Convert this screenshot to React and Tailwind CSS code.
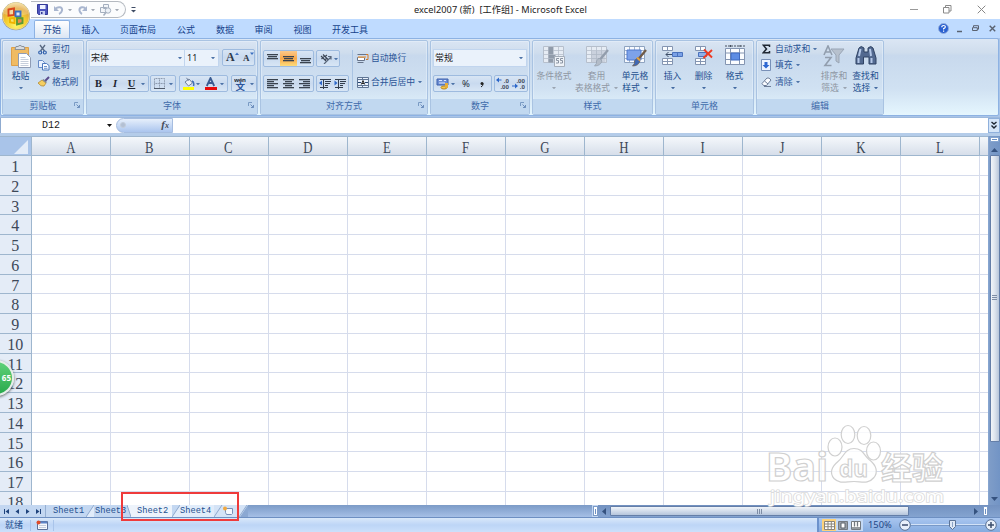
import React from "react";

const COLS = ["A", "B", "C", "D", "E", "F", "G", "H", "I", "J", "K", "L"];
const ROWS = Array.from({ length: 18 }, (_, i) => i + 1);

function Caret({ className = "" }) {
  return (
    <svg viewBox="0 0 4 2" className={"h-[2px] w-[4px] shrink-0 " + className} fill="currentColor">
      <path d="M0 0h4L2 2.400z" />
    </svg>
  );
}

function Svg({ w, h, children, className = "" }) {
  return (
    <svg width={w} height={h} viewBox={`0 0 ${w} ${h}`} className={"shrink-0 " + className} fill="none">
      {children}
    </svg>
  );
}

/* ---------- Title bar ---------- */

function OfficeButton() {
  return (
    <svg width="30" height="30" viewBox="0 0 30 30" className="absolute left-[1px] top-[1px] z-10">
      <defs>
        <radialGradient id="orb" cx="50%" cy="85%" r="85%">
          <stop offset="0" stopColor="#fff56a" />
          <stop offset="0.45" stopColor="#f4cf30" />
          <stop offset="0.75" stopColor="#e3a63a" />
          <stop offset="1" stopColor="#f3dc9c" />
        </radialGradient>
      </defs>
      <circle cx="15" cy="15.3" r="14" fill="#8b8f96" />
      <circle cx="15" cy="15" r="13.4" fill="url(#orb)" stroke="#f0dc90" strokeWidth="0.8" />
      <path d="M3 13a12 11 0 0 1 24 0q-12 4-24 0z" fill="#fff" opacity="0.22" />
      <g strokeWidth="1.9">
        <path d="M7.500 8.500l5.500-1v6.500l-5.500 .6z" stroke="#d9481c" fill="#f6d9a0" />
        <path d="M14.500 10.500h5v5h-5z" stroke="#3a6fc0" fill="#dbe8f5" />
        <path d="M9 17.500l4.500-.4v5l-4.500-.8z" stroke="#f0b400" fill="#f9e46c" />
        <path d="M16 17l5.500 .2v4.800l-5.500 1.500z" stroke="#5b9a36" fill="#f08a4a" />
      </g>
    </svg>
  );
}

function TitleBar() {
  return (
    <div className="flex h-[19px] bg-white">
      <div className="mt-px ml-[31px] flex h-[17px] w-[95px] items-center rounded-r-full border border-l-0 border-[#b4b9c0] bg-[#fbfcfd] pl-[6px] text-[#a3a9b3]">
        <Svg w={11} h={11}>
          <path d="M.5.5h10v10H1.500l-1-1z" fill="#4d55bd" stroke="#343a98" />
          <path d="M3 1h5.500v4H3z" fill="#eef2ff" />
          <path d="M3 7h5v4H3z" fill="#c7cff0" />
          <path d="M4 8h1.500v2H4z" fill="#343a98" />
        </Svg>
        <Svg w={10} h={10} className="ml-[6px]">
          <path d="M1.500 4C4 1 9 2 8 5.500Q7.500 8 5 9" stroke="#a9b6cf" strokeWidth="2" />
          <path d="M0 1v5h5z" fill="#a9b6cf" />
        </Svg>
        <Caret className="ml-[4px]" />
        <Svg w={9} h={10} className="ml-[6px]">
          <path d="M7.500 4C6 1 1 2 1.500 5.500Q2 8 4 9" stroke="#a9b6cf" strokeWidth="2" />
          <path d="M9 1v5H4z" fill="#a9b6cf" />
        </Svg>
        <Caret className="ml-[4px]" />
        <Svg w={12} h={12} className="ml-[5px]">
          <path d="M3.500 .5h5v4h-5zM.5 3.500h6v5h-6z" fill="#f2f5f9" stroke="#a4afbf" />
          <circle cx="8" cy="6.500" r="2.700" fill="#edf2f8" stroke="#a4afbf" />
          <path d="M6 8.500L3.500 11.500" stroke="#a4afbf" strokeWidth="1.500" />
        </Svg>
        <Caret className="ml-[3px]" />
      </div>
      <div className="flex w-[14px] items-center justify-center text-[#3f4d66]">
        <Svg w={5} h={6}>
          <path d="M.5 .5h4" stroke="currentColor" />
          <path d="M0 3h5L2.500 5.500z" fill="currentColor" />
        </Svg>
      </div>
      <div className="ml-[274px] whitespace-pre font-['Noto_Sans','Noto_Sans_CJK_SC',sans-serif] text-[9.200px] leading-[19px] tracking-[0.060px] text-[#222]">
        {"excel2007 (新)\u00a0 [工作组] - Microsoft Excel"}
      </div>
      <div className="ml-auto flex items-center gap-[25px] pr-[14px]">
        <Svg w={8} h={9}><path d="M0 4.500h8" stroke="#999" /></Svg>
        <Svg w={9} h={9}><path d="M.5 2.500h5.500v5.500H.5zM2.500 2.500v-2h5.500V6H6" stroke="#8a8a8a" /></Svg>
        <Svg w={9} h={9}><path d="M.7.7l7.600 7.600M8.300.7L.7 8.300" stroke="#888" /></Svg>
      </div>
    </div>
  );
}

/* ---------- Ribbon tabs ---------- */

const TABS = [
  ["插入", "w-[39px]"],
  ["页面布局", "w-[56px]"],
  ["公式", "w-[40px]"],
  ["数据", "w-[38px]"],
  ["审阅", "w-[39px]"],
  ["视图", "w-[39px]"],
  ["开发工具", "w-[56px]"],
];

function TabBar() {
  return (
    <div className="flex h-[19px] items-end bg-[#bfdbff] text-[9px] leading-[17px] text-[#15428b]">
      <div className="ml-[34px] mr-px h-[18px] w-[36px] rounded-t-[2px] border border-b-0 border-[#8db2e3] bg-gradient-to-b from-white to-[#dbe6f4] text-center">
        开始
      </div>
      {TABS.map(([t, w]) => (
        <div key={t} className={"h-[18px] pt-px text-center " + w}>
          {t}
        </div>
      ))}
      <div className="ml-auto flex h-[19px] items-center pr-[4px] text-[#5a6270]">
        <Svg w={11} h={11}>
          <circle cx="5.500" cy="5.500" r="5" fill="#2a60d0" stroke="#93aede" />
          <path d="M3.800 4.200q0-1.700 1.800-1.700t1.700 1.400q0 1-1.700 1.700v1M5.600 7.600v1.200" stroke="#fff" strokeWidth="1.200" />
        </Svg>
        <Svg w={6} h={8} className="ml-[8px]"><path d="M0 6.500h5" stroke="currentColor" strokeWidth="1.500" /></Svg>
        <Svg w={7} h={7} className="ml-[9px]"><path d="M1.500 2V.7h5v3.500H5.500M.5 2.700h4.800v2.800H.5z" stroke="currentColor" /></Svg>
        <Svg w={7} h={7} className="ml-[10px]"><path d="M.7.7l5.500 5.500M6.200.7L.7 6.200" stroke="currentColor" strokeWidth="1.400" /></Svg>
      </div>
    </div>
  );
}

/* ---------- Ribbon ---------- */

function Launcher() {
  return (
    <Svg w={6} h={6} className="absolute right-[3px] top-[3px]">
      <path d="M.5 4V.5H4" stroke="#7a9bc4" />
      <path d="M2.500 2.500l3 3M5.500 3v2.500H3" stroke="#6d8fbd" />
    </Svg>
  );
}

function Group({ title, width, launcher, children }) {
  return (
    <div className={"flex h-[75px] shrink-0 flex-col overflow-hidden rounded-[2px] border border-[#a9c3e2] shadow-[inset_0_0_0_0.500px_#e9f2fc] " + width}>
      <div className="flex h-[58px] shrink-0">{children}</div>
      <div className="relative h-[15px] bg-[#c1d8f0] text-center text-[9px] leading-[14px] text-[#3e6aaa]">
        {title}
        {launcher && <Launcher />}
      </div>
    </div>
  );
}

function Box({ className = "", children }) {
  return (
    <div className={"flex h-[17px] shrink-0 items-center rounded-[2px] border border-[#9ebbdf] bg-gradient-to-b from-[#d8e5f4] via-[#c9daef] to-[#d8e6f5] " + className}>
      {children}
    </div>
  );
}

function Small({ icon, label, caret, className = "" }) {
  return (
    <div className={"flex h-[16.300px] items-center whitespace-nowrap text-[8.800px] leading-[16px] text-[#2b5597] " + className}>
      <span className="flex w-[14px] shrink-0 items-center">{icon}</span>
      {label}
      {caret && <Caret className="ml-[3px] text-[#4e74a8]" />}
    </div>
  );
}

function Big({ icon, l1, l2, caret = true, className = "", tone = "text-[#24508f]" }) {
  return (
    <div className={"flex shrink-0 flex-col items-center whitespace-nowrap text-[8.800px] leading-[12px] " + tone + " " + className}>
      <span className="mt-[4px] flex h-[25px] items-start">{icon}</span>
      <span>{l1}</span>
      <span className="flex h-[12px] items-center">
        {l2}
        {caret && <Caret className={l2 ? "ml-[4px] opacity-80" : "opacity-80"} />}
      </span>
    </div>
  );
}

function Lines({ rows }) {
  return (
    <Svg w={11} h={11}>
      {rows.map(([x, y, w], i) => (
        <rect key={i} x={x} y={y} width={w} height="1.300" fill="#3a434f" />
      ))}
    </Svg>
  );
}

function GridIcon({ stroke = "#8ea3c0", fill = "#f7faff", children }) {
  return (
    <Svg w={24} h={23}>
      <path d="M1.500 1.500h20v16h-20z" fill={fill} stroke={stroke} />
      <path d="M1 5.500h20M1 9.500h20M1 13.500h20M6.500 1.500v16M11.500 1.500v16M16.500 1.500v16" stroke={stroke} strokeWidth=".8" />
      {children}
    </Svg>
  );
}

function ClipboardGroup() {
  return (
    <Group title="剪贴板" width="w-[82px]" launcher>
      <div className="flex w-[35px] shrink-0 flex-col items-center text-[8.800px] leading-[12px] text-[#24508f]">
        <Svg w={22} h={25} className="mt-[3px]">
          <path d="M1.500 3.500h17v18h-17z" fill="#f0bb62" stroke="#dda04a" />
          <path d="M5 5.500l1-3h2q2-2.500 4 0h2l1 3z" fill="#d7dbe0" stroke="#8b929b" />
          <path d="M8.500 9.500h8l4 4v10h-12z" fill="#fff" stroke="#8f9cb5" />
          <path d="M10.500 13.500h5M10.500 15.500h8M10.500 17.500h8M10.500 19.500h8M10.500 21.500h8" stroke="#c6cedb" />
        </Svg>
        <span className="mt-[1px]">粘贴</span>
        <Caret className="mt-[5px] text-[#4e74a8]" />
      </div>
      <div className="flex flex-col">
        <Small label="剪切" icon={<Svg w={9} h={11}><path d="M2 1l4.500 6M7 1L2.500 7" stroke="#5a6a83" strokeWidth="1.300" /><circle cx="2.200" cy="8.500" r="1.500" stroke="#3161ad" strokeWidth="1.200" /><circle cx="6.800" cy="8.500" r="1.500" stroke="#3161ad" strokeWidth="1.200" /></Svg>} />
        <Small label="复制" icon={<Svg w={12} h={11}><path d="M.5.5h4l2 2v5h-6z" fill="#e8f1ff" stroke="#668bc6" /><path d="M4.500 3.500h4l2.500 2V10H4.500z" fill="#f8fbff" stroke="#4d78bd" /><path d="M6 6.500h3M6 8.300h3.500" stroke="#6b92cc" /></Svg>} />
        <Small label="格式刷" icon={<Svg w={12} h={11}><path d="M11 1L7 5" stroke="#5b4a8c" strokeWidth="2" /><path d="M4 4l4 3-2 3q-3 1-6-3z" fill="#f5cf61" stroke="#b48a35" strokeWidth=".8" /><path d="M5 3.500l3.500 3" stroke="#7b8290" strokeWidth="1.500" /></Svg>} />
      </div>
    </Group>
  );
}

function FontGroup() {
  return (
    <Group title="字体" width="w-[172px]" launcher>
      <div className="flex flex-col pl-[2px] pt-[8px]">
        <div className="flex h-[19px]">
          <div className="flex h-[18px] w-[96px] items-center border border-[#c1d5ee] bg-[#eaf2fb] pl-[1px] pr-[2px] text-[9px] text-[#222]">
            宋体<Caret className="ml-auto text-[#4e74a8]" />
          </div>
          <div className="flex h-[18px] w-[34px] items-center border border-l-0 border-[#c1d5ee] bg-[#eaf2fb] pl-[2px] pr-[3px] text-[9px] text-[#222]">
            11<Caret className="ml-auto text-[#4e74a8]" />
          </div>
          <Box className="ml-[3px] w-[33px] font-['Liberation_Serif',serif] font-bold text-[#2e3947]">
            <span className="w-[12px] pl-[3px] text-[12px] leading-[15px]">A</span>
            <Svg w={4} h={10} className="mb-[2px]"><path d="M0 3h4L2 .5z" fill="#3b6fc0" /></Svg>
            <span className="pl-[4px] pt-[2px] text-[9px] leading-[13px]">A</span>
            <Svg w={4} h={10} className="mb-[2px]"><path d="M0 .5h4L2 3z" fill="#3b6fc0" /></Svg>
          </Box>
        </div>
        <div className="mt-[7px] flex font-['Liberation_Serif',serif] text-[#1e2530]">
          <Box className="w-[60px] text-[10.500px] leading-[15px]">
            <b className="w-[17px] text-center">B</b>
            <b className="w-[16px] text-center italic">I</b>
            <b className="w-[17px] text-center underline">U</b>
            <Caret className="ml-px text-[#4e74a8]" />
          </Box>
          <Box className="ml-[1px] w-[26px] gap-[4px] pl-[3px]">
            <Svg w={11} h={11}><path d="M.5.5h10v10H.5zM5.500.5v10M.5 5.500h10" stroke="#8794a8" strokeDasharray="1 .6" /><path d="M0 10.500h11" stroke="#4f5a6b" /></Svg>
            <Caret className="text-[#4e74a8]" />
          </Box>
          <Box className="ml-[3px] w-[49px] pl-[2px]">
            <Svg w={13} h={13}><path d="M3 5l4-3 3.500 4-4 3z" fill="#e9eef5" stroke="#70809b" /><path d="M10 4q2.500 1 1.500 5" stroke="#416fb5" strokeWidth="1.500" /><path d="M4.500.8l2 3" stroke="#70809b" /><path d="M1 10h11v3H1z" fill="#ff0" /></Svg>
            <Caret className="ml-[1px] text-[#4e74a8]" />
            <Svg w={13} h={13} className="ml-[4px]"><path d="M2.800 9L6.500 1 10.200 9M4.300 6h4.400" stroke="#3b5c92" strokeWidth="1.800" /><path d="M1 10h12v3H1z" fill="#e80c0c" /></Svg>
            <Caret className="ml-[3px] text-[#4e74a8]" />
          </Box>
          <Box className="ml-[3px] w-[26px] pl-[2px]">
            <Svg w={13} h={14}>
              <text x="0" y="5" fontSize="6" fontWeight="700" fontFamily="'Noto Sans',sans-serif" fill="#2a313c" textLength="12">wén</text>
              <text x="1.500" y="13" fontSize="9.500" fontWeight="700" fontFamily="'Noto Sans CJK SC',sans-serif" fill="#2a559c">文</text>
            </Svg>
            <Caret className="ml-[3px] text-[#4e74a8]" />
          </Box>
        </div>
      </div>
    </Group>
  );
}

function AlignGroup() {
  return (
    <Group title="对齐方式" width="w-[168px]" launcher>
      <div className="flex w-[91px] flex-col gap-[8px] pl-[2px] pt-[9px]">
        <div className="flex gap-[2px]">
          <Box className="w-[51px] justify-between">
            <span className="flex w-[16px] justify-center"><Lines rows={[[0, 1, 11], [1, 3, 9], [0, 5, 11]]} /></span>
            <span className="flex h-[15px] w-[17px] items-center justify-center bg-gradient-to-b from-[#fbc98a] via-[#f9a848] to-[#fddc7b]"><Lines rows={[[0, 3, 11], [1, 5, 9], [0, 7, 11]]} /></span>
            <span className="flex w-[16px] justify-center"><Lines rows={[[0, 5, 11], [1, 7, 9], [0, 9, 11]]} /></span>
          </Box>
          <Box className="w-[24px] gap-[2px] pl-[3px]">
            <Svg w={12} h={11}><path d="M4 11L11 4M8 3.500h3v3" stroke="#59677b" strokeWidth="1.200" /><path d="M1 3l5 5M3 1.500l5 5M1.500 6l3-3M5 3.500l2-1.500M4.500 7l2.500-2" stroke="#3c4655" strokeWidth="1.100" /></Svg>
            <Caret className="text-[#4e74a8]" />
          </Box>
        </div>
        <div className="flex gap-[2px]">
          <Box className="w-[51px] justify-around">
            <Lines rows={[[0, 1, 11], [0, 3, 7], [0, 5, 11], [0, 7, 7], [0, 9, 11]]} />
            <Lines rows={[[0, 1, 11], [2, 3, 7], [0, 5, 11], [2, 7, 7], [0, 9, 11]]} />
            <Lines rows={[[0, 1, 11], [4, 3, 7], [0, 5, 11], [4, 7, 7], [0, 9, 11]]} />
          </Box>
          <Box className="w-[33px] justify-around">
            <Svg w={12} h={11}><path d="M1 1.500h11M6 3.500h6M6 5.500h5M6 7.500h3M1 9.500h8M4.500 1v10" stroke="#333e4d" /><path d="M0 5l3-2.500v5z" fill="#2c67c9" /></Svg>
            <Svg w={12} h={11}><path d="M1 1.500h11M6 3.500h6M6 5.500h5M6 7.500h3M1 9.500h8M4.500 1v10" stroke="#333e4d" /><path d="M3.500 5l-3-2.500v5z" fill="#2c67c9" /></Svg>
          </Box>
        </div>
      </div>
      <div className="mt-[9px] h-[40px] w-px bg-[#a9c3e2]" />
      <div className="flex flex-col pl-[4px] pt-[9px]">
        <Small label="自动换行" icon={<Svg w={12} h={11}><path d="M.5 1.500h9M.5 4.500h7v3h-7zM.5 9.500h6" stroke="#67748a" fill="#fff" /><path d="M1 4h8" stroke="#e8a35a" strokeWidth="1.500" /><path d="M9 1.500h2v5H9" stroke="#d47a28" /></Svg>} />
        <Small className="mt-[7.700px]" caret label="合并后居中" icon={<Svg w={12} h={11}><path d="M.5.500h11v10H.5zM.5 2.500h11M.5 8.500h11M5.500.5v2M5.500 8.500v2" fill="#e9f1fc" stroke="#5f7594" /><path d="M1 5.500h3M8 5.500h3" stroke="#22426e" /><path d="M4.300 7.500L6 3.500l1.700 4M5 6.500h2" stroke="#222" /></Svg>} />
      </div>
    </Group>
  );
}

function DecimalIcon({ top, bottom, increase }) {
  return (
    <Svg w={14} h={13}>
      <g fontSize="6.200" fontWeight="700" fontFamily="'Liberation Sans',sans-serif" fill="#3b4657" textAnchor="end">
        <text x="13" y="5.500">{top}</text>
        <text x="13" y="11.500">{bottom}</text>
      </g>
      {increase ? (
        <path d="M0 3l3-2.500v5zM3 2.500h2.500v1H3z" fill="#2c67c9" />
      ) : (
        <path d="M6 9L3 6.500v5zM0 8.500h3v1H0z" fill="#2c67c9" />
      )}
    </Svg>
  );
}

function NumberGroup() {
  return (
    <Group title="数字" width="w-[100px]" launcher>
      <div className="flex flex-col pl-[2px] pt-[8px]">
        <div className="flex h-[18px] w-[94px] items-center border border-[#c1d5ee] bg-[#eaf2fb] pl-[1px] pr-[3px] text-[9px] text-[#222]">
          常规<Caret className="ml-auto text-[#4e74a8]" />
        </div>
        <div className="mt-[8px] flex gap-[2px]">
          <Box className="w-[59px] pl-[2px]">
            <Svg w={13} h={12}><path d="M1 1h11v6H1z" fill="#6e8ed3" stroke="#3d61ad" /><path d="M3 2.500h3M8 2.500h2M3 5h6" stroke="#dce8ff" /><ellipse cx="8" cy="9.500" rx="3" ry="1.500" fill="#f5c84d" stroke="#b78522" /><path d="M9 5h3v5H9z" fill="#e6ad38" /></Svg>
            <Caret className="ml-[2px] text-[#4e74a8]" />
            <span className="ml-[7px] text-[9.500px] leading-[15px] text-[#273140]">%</span>
            <svg width="4" height="6" viewBox="0 0 4 6" className="ml-[10px] mt-[2px]"><circle cx="2" cy="1.600" r="1.500" fill="#222" /><path d="M3 1.500q.2 2.500-2 3.500" stroke="#222" fill="none" /></svg>
          </Box>
          <Box className="w-[34px] justify-around">
            <DecimalIcon top=".0" bottom=".00" increase />
            <DecimalIcon top=".00" bottom=".0" />
          </Box>
        </div>
      </div>
    </Group>
  );
}

function StylesGroup() {
  const brush = (a, b) => (
    <>
      <path d="M23 5l-7.500 9" stroke={a} strokeWidth="2.300" />
      <path d="M14 13l3 3q-1.500 5-7.500 5 3-3 2-5z" fill={b} stroke={a} strokeWidth=".7" />
    </>
  );
  return (
    <Group title="样式" width="w-[121px]">
      <Big className="w-[42px]" tone="text-[#8f97a3]" l1="条件格式" icon={
        <GridIcon stroke="#b6bfcc" fill="#e6ecf4">
          <path d="M6.500 2h4.500v7.500H6.500zM6.500 10h7v3.500h-7zM6.500 14h4.500v3.500H6.500z" fill="#909baa" />
          <path d="M12.500 11.500h10v10h-10z" fill="#eef2f7" stroke="#a4adb9" />
          <path d="M17 13.500h-2.500v2h2v2.500h-2.500M21 13.500h-2.500v2h2v2.500H18" stroke="#8a94a3" />
        </GridIcon>} />
      <Big className="w-[43px]" tone="text-[#8f97a3]" l1="套用" l2="表格格式" icon={
        <GridIcon stroke="#b6bfcc" fill="#e6ecf4">
          <path d="M6.500 6h14v11h-14z" fill="#a8b2c1" opacity=".45" />
          {brush("#929dac", "#b3bcc8")}
        </GridIcon>} />
      <Big className="w-[34px]" l1="单元格" l2="样式" icon={
        <GridIcon>
          <path d="M4 5h14v10H4z" fill="#7da2ea" stroke="#4f78cc" />
          {brush("#6f5b49", "#3f68b4")}
          <path d="M14 12.500l3 3" stroke="#e2a23f" strokeWidth="2" />
        </GridIcon>} />
    </Group>
  );
}

function CellsGroup() {
  const table = (
    <path d="M1.500 1.500h10v4h-10zM6.500 1.500v4M1.500 13.500h10v6h-10zM6.500 13.500v6M1.500 16.500h10" fill="#fbfdff" stroke="#8495b1" />
  );
  return (
    <Group title="单元格" width="w-[99px]">
      <Big className="w-[33px]" l1="插入" icon={
        <Svg w={23} h={22}>{table}<path d="M11.500 7.500h10v4h-10z" fill="#7aa1e6" stroke="#4a72bd" /><path d="M16.500 7.500v4" stroke="#4a72bd" /><path d="M5 9.500h6M7.500 7L5 9.500 7.500 12" stroke="#3c4d67" /></Svg>} />
      <Big className="w-[29px]" l1="删除" icon={
        <Svg w={20} h={22}>{table}<path d="M4.500 7.500h8v4h-8z" fill="#8fb0ea" stroke="#4a72bd" /><path d="M10 4.500l8 8M18 5l-8.500 8" stroke="#ee3b24" strokeWidth="1.900" /></Svg>} />
      <Big className="w-[33px]" l1="格式" icon={
        <Svg w={24} h={23}><path d="M2.500 3.500h19v16h-19z" fill="#fbfdff" stroke="#8495b1" /><path d="M2 8h20M2 14.500h20M7.500 3.500v16M16.500 3.500v16" stroke="#8495b1" /><path d="M8 8h8.500v7H8z" fill="#5d8de4" stroke="#3e6ac0" /><path d="M2 1h20M7.500 0v2.500M17 0v2.500" stroke="#46505e" strokeDasharray="2 1" /></Svg>} />
    </Group>
  );
}

function EditGroup() {
  return (
    <Group title="编辑" width="w-[128px]">
      <div className="flex w-[60px] shrink-0 flex-col pl-[4px]">
        <Small label="自动求和" caret icon={<Svg w={9} h={10} className="ml-[1px]"><path d="M7.500 3V1.200H1.300L4.500 5 1.300 8.700h6.200V7" stroke="#1f2733" strokeWidth="1.500" /></Svg>} />
        <Small label="填充" caret icon={<Svg w={10} h={12}><path d="M.5.5h9v11h-9z" fill="#eef4ff" stroke="#7890b8" /><path d="M3.500 3h3v3H8.500L5 9.500 1.500 6h2z" fill="#2d67d2" /></Svg>} />
        <Small label="清除" caret icon={<Svg w={11} h={10}><path d="M1 6.500L6 1q2-.8 4 2L5.500 8.500H2.500z" fill="#fafcff" stroke="#6c7d98" /><path d="M3.500 4l3.500 3M3 9.500h7" stroke="#6c7d98" /></Svg>} />
      </div>
      <Big className="ml-px w-[32px]" tone="text-[#8f97a3]" l1="排序和" l2="筛选" icon={
        <Svg w={24} h={23}><path d="M2 10L6 1l4 9M3.500 7h5M3 12.500h6L3 20.500h6.500" stroke="#929eae" strokeWidth="1.600" /><path d="M9 4h13l-5 6v8l-3-2v-6z" fill="#b7c1ce" stroke="#99a5b5" /></Svg>} />
      <Big className="w-[31px]" l1="查找和" l2="选择" icon={
        <Svg w={22} h={22}>
          <path d="M4 3q2-3 5 0v4h4V3q3-3 5 0l3 10v6h-7v-7H8.500v7H1v-6z" fill="#526990" stroke="#2f4263" />
          <path d="M3.500 13v5M16.500 13v5M5.500 4L4 11M15 4l1 7" stroke="#b4c8e8" strokeWidth="2" />
        </Svg>} />
    </Group>
  );
}

function Ribbon() {
  return (
    <div className="h-[79px] bg-[#a9c4e8]">
      <div className="flex h-[78px] w-[999px] gap-[2px] rounded-[2px] border border-[#8db2e3] bg-[linear-gradient(180deg,#dbe6f4_0%,#cfdded_18%,#c8d9ed_22%,#d0e1f2_65%,#e5f6fe_100%)] pl-px pt-px">
        <ClipboardGroup />
        <FontGroup />
        <AlignGroup />
        <NumberGroup />
        <StylesGroup />
        <CellsGroup />
        <EditGroup />
      </div>
    </div>
  );
}

/* ---------- Formula bar ---------- */

function FormulaBar() {
  return (
    <div className="flex h-[18.500px] border-b-[3px] border-t-[1.500px] border-b-[#b4cce9] border-t-[#9db9dc] bg-white">
      <div className="flex w-[116px] items-center border-l border-[#8fabd0] pl-[41px] pr-[4px] font-['Liberation_Mono',monospace] text-[10px] text-[#222]">
        D12
        <Svg w={5} h={3} className="ml-auto"><path d="M0 0h5L2.500 3z" fill="#111" /></Svg>
      </div>
      <div className="flex w-[57px] items-center rounded-l-full border border-[#a6bde0] bg-gradient-to-b from-[#e6effb] to-[#abc5ee] pl-[3px] pr-[3px]">
        <span className="h-[6px] w-[6px] rounded-full border border-[#c3cddb] bg-[#b3c0d4]" />
        <span className="ml-auto font-['Liberation_Serif',serif] text-[11px] font-bold italic leading-[11px] text-[#444c58]">f<span className="text-[8px]">x</span></span>
      </div>
      <div className="flex-1" />
      <div className="flex w-[12px] items-center justify-center border border-[#8fb0dc] bg-[#d5e5f8]">
        <Svg w={6} h={8}><path d="M.5 1L3 3l2.500-2M.5 4.500L3 7l2.500-2.500" stroke="#1d2530" strokeWidth="1.400" /></Svg>
      </div>
    </div>
  );
}

/* ---------- Sheet ---------- */

function Grid() {
  return (
    <div className="h-[370px] min-w-0 flex-1 overflow-hidden bg-white font-['Liberation_Serif',serif] text-[#3d4858]">
      <div className="flex h-[20.500px] bg-gradient-to-b from-[#f6f9fc] to-[#d5dde9] text-[16px]">
        <div className="flex w-[31.500px] shrink-0 items-end justify-end border-b border-r border-t border-[#9eb6ce] bg-[#a9c4e9] pb-[1px] pr-[3px]">
          <Svg w={14} h={14}><path d="M14 0v14H0z" fill="#e3ecf8" /></Svg>
        </div>
        {COLS.map((c) => (
          <div key={c} className="w-[79.050px] shrink-0 border-b border-r border-t border-[#9eb6ce] text-center leading-[22px]">
            <span className="inline-block scale-x-[0.8]">{c}</span>
          </div>
        ))}
        <div className="flex-1 border-b border-t border-[#9eb6ce]" />
      </div>
      {ROWS.map((r) => (
        <div key={r} className="flex h-[19.770px]">
          <div className="w-[31.500px] shrink-0 border-b border-r border-[#9eb6ce] bg-[#e4ecf7] text-center text-[16px] leading-[22px]">{r}</div>
          {COLS.map((c) => (
            <div key={c} className="w-[79.050px] shrink-0 border-b border-r border-[#d6dcec]" />
          ))}
          <div className="flex-1 border-b border-[#d6dcec]" />
        </div>
      ))}
    </div>
  );
}

function VScroll() {
  return (
    <div className="flex w-[12px] flex-col items-center border-l border-[#86a5d0] bg-gradient-to-r from-[#7f9dc8] to-[#7294c5] text-[#35527f]">
      <div className="mt-px flex h-[5px] w-[9px] items-center justify-center border border-[#86a5d0] bg-white"><span className="h-px w-[5px] bg-[#6b8fc2]" /></div>
      <Svg w={7} h={4} className="mt-[6px]"><path d="M0 4h7L3.500 0z" fill="currentColor" /></Svg>
      <div className="mt-[3px] flex h-[287px] w-[10px] items-center justify-center rounded-[1px] border border-[#647ea8] bg-gradient-to-r from-[#f2f5f9] via-[#dce3ed] to-[#b7c5da]">
        <Svg w={5} h={6}><path d="M0 .5h5M0 2.500h5M0 4.500h5" stroke="#7e8da5" /></Svg>
      </div>
      <Svg w={7} h={4} className="mb-[4px] mt-auto"><path d="M0 0h7L3.500 4z" fill="currentColor" /></Svg>
    </div>
  );
}

function Slash() {
  return (
    <Svg w={8} h={12}><path d="M0 12L8 0v12z" fill="#e1ecfa" /><path d="M0 12L8 0" stroke="#8ea9cd" /></Svg>
  );
}

function SheetTabs() {
  return (
    <div className="flex h-[12px] bg-[#c3d7f1] font-['Liberation_Mono',monospace] text-[8.700px] leading-[12px] text-[#24508f]">
      <div className="flex w-[46px] items-center justify-between border-r border-[#95afd2] pl-[4px] pr-[4px]">
        <Svg w={5} h={5}><path d="M.5 0v5" stroke="#1f437c" /><path d="M5 0v5L1.500 2.500z" fill="#1f437c" /></Svg>
        <Svg w={4} h={5}><path d="M4 0v5L.5 2.500z" fill="#1f437c" /></Svg>
        <Svg w={4} h={5}><path d="M0 0v5l3.500-2.500z" fill="#1f437c" /></Svg>
        <Svg w={5} h={5}><path d="M4.500 0v5" stroke="#1f437c" /><path d="M0 0v5l3.500-2.500z" fill="#1f437c" /></Svg>
      </div>
      <span className="w-[40px] pl-[7px]">Sheet1</span>
      <Slash />
      <span className="w-[33px] pl-[1px]">Sheet3</span>
      <Svg w={4} h={12}><path d="M0 0h4v12z" fill="#edf3fb" /><path d="M0 0l4 12" stroke="#8ea9cd" /></Svg>
      <span className="w-[41px] bg-[#edf3fb] pl-[6px]">Sheet2</span>
      <Slash />
      <span className="w-[34px] bg-[#e1ecfa]">Sheet4</span>
      <Svg w={34} h={12}>
        <path d="M0 0h34l-8 12H0z" fill="#d4e3f6" />
        <path d="M0 12L8 0M25 12L33 0" stroke="#8ea9cd" />
        <path d="M26 12L34 0v12z" fill="#8ba8d2" />
        <path d="M11.500 3.500h7v5l-1 1h-5l-1-2z" fill="#f5f8fd" stroke="#7890b8" />
        <circle cx="11" cy="3.500" r="2" fill="#f0a840" />
      </Svg>
      <div className="w-[344px] bg-gradient-to-b from-[#7c9bc7] to-[#a5bfe6]" />
      <div className="my-px ml-px flex w-[5px] items-center justify-center border border-[#7c9bc7] bg-white"><span className="h-[5px] w-px bg-[#6b8fc2]" /></div>
      <div className="flex flex-1 items-center bg-gradient-to-b from-[#7291c0] to-[#84a3d0] text-[#35527f]">
        <Svg w={4} h={7} className="ml-[4px]"><path d="M4 0v7L0 3.500z" fill="currentColor" /></Svg>
        <div className="ml-[4px] flex h-[10px] w-[299px] items-center justify-center rounded-[1px] border border-[#647ea8] bg-gradient-to-b from-[#f0f4f9] to-[#b5c5dc]">
          <Svg w={6} h={5}><path d="M.5 0v5M2.500 0v5M4.500 0v5" stroke="#7e8da5" /></Svg>
        </div>
        <Svg w={4} h={7} className="ml-auto"><path d="M0 0v7l4-3.500z" fill="currentColor" /></Svg>
        <div className="ml-[5px] mr-[12px] flex h-[10px] w-[5px] items-center justify-center border border-[#7c9bc7] bg-white"><span className="h-[5px] w-px bg-[#6b8fc2]" /></div>
      </div>
    </div>
  );
}

function ZoomButton({ plus }) {
  return (
    <Svg w={12} h={12}>
      <circle cx="6" cy="6" r="5.300" fill="#e9f0fa" stroke="#5b7396" />
      <path d={plus ? "M3 6h6M6 3v6" : "M3 6h6"} stroke="#3b4d6c" strokeWidth="1.500" />
    </Svg>
  );
}

function StatusBar() {
  return (
    <div className="flex h-[15px] items-center border-t border-[#6d8fc2] bg-gradient-to-b from-[#d9e8fa] via-[#bdd5f6] to-[#cbe0fb] text-[9px] leading-[14px] text-[#24508f]">
      <span className="w-[30px] pl-[5px]">就绪</span>
      <span className="flex w-[24px] items-center border-x border-[#a9c4ea] pl-[5px]">
        <Svg w={12} h={11}><path d="M1.500 1.500h10v8h-10z" fill="#f5f8fd" stroke="#5c7099" /><path d="M1 2.500h10" stroke="#5b83c7" strokeWidth="2" /><path d="M3 5.500h7M3 7.500h7" stroke="#c3ccdb" /><circle cx="2.500" cy="2.500" r="2" fill="#de4b2a" /></Svg>
      </span>
      <div className="ml-auto flex h-[14px] w-[183px] items-center border-l-2 border-[#6c92cc] bg-gradient-to-b from-[#a9c6f0] to-[#85abdf] pl-[3px]">
        <span className="flex h-[12px] w-[14px] items-center justify-center bg-[#fcd27c]"><Svg w={11} h={9}><path d="M.5.5h10v8H.5zM.5 3h10M.5 5.700h10M4 .5v8M7.300.5v8" fill="#fff" stroke="#8a857a" /></Svg></span>
        <span className="flex h-[12px] w-[13px] items-center justify-center bg-[#c4d9f5]"><Svg w={10} h={9}><path d="M.5.5h9v8h-9z" fill="#989ea6" stroke="#737980" /><path d="M3 2h4v5H3z" fill="#fff" stroke="#5d646d" /></Svg></span>
        <span className="flex h-[12px] w-[14px] items-center justify-center bg-[#c4d9f5]"><Svg w={10} h={9}><path d="M.5.5h9v8h-9z" fill="#fff" stroke="#737980" /><path d="M3.500.5v5M6.500.5v5M.5 7h9" stroke="#737980" strokeWidth="1.300" /></Svg></span>
        <span className="ml-[5px] w-[31px] font-['Noto_Sans',sans-serif] text-[9.300px] text-[#1e4685]">150%</span>
        <ZoomButton />
        <Svg w={74} h={12}><path d="M0 5.500h74" stroke="#d2e2f7" /><path d="M0 6.500h74" stroke="#6485b4" strokeWidth=".6" /><path d="M38.500 1.500h6v6l-3 3-3-3z" fill="#dfe9f6" stroke="#5b7396" /><path d="M41.500 3v5" stroke="#8ba3c5" /></Svg>
        <ZoomButton plus />
      </div>
    </div>
  );
}

function Watermark() {
  return (
    <svg width="190" height="92" viewBox="0 0 190 92" className="absolute left-[762px] top-[420px]" fill="#fff" stroke="#d0d0d0" strokeWidth="1.200" fillOpacity=".8">
      <text x="4" y="60.500" fontSize="40" fontWeight="700" fontFamily="'Noto Sans',sans-serif" textLength="62" lengthAdjust="spacingAndGlyphs">Bai</text>
      <text x="119" y="59" fontSize="31" fontWeight="700" textLength="62" fontFamily="'Noto Sans CJK SC',sans-serif">经验</text>
      <text x="8" y="82" fontSize="17" fontWeight="400" fontFamily="'Noto Sans',sans-serif" textLength="174" lengthAdjust="spacingAndGlyphs" strokeWidth="1.600" stroke="#dcdcdc" style={{ paintOrder: "stroke" }} fillOpacity="1">jingyan.baidu.com</text>
      <ellipse cx="73" cy="27" rx="7" ry="9" />
      <ellipse cx="86" cy="14.500" rx="6.800" ry="9" />
      <ellipse cx="102" cy="15.500" rx="6.800" ry="9" />
      <ellipse cx="111.500" cy="31" rx="7" ry="9" />
      <path d="M92 28.500c9 0 10 7 15 11 8 6 9 13 5 18-6 7-12 4-20 4s-14 3-20-3c-5-6-2-12 4-17s7-13 16-13z" />
      <text x="77" y="56.500" fontSize="24" fontWeight="700" fontFamily="'Noto Sans',sans-serif" textLength="29" lengthAdjust="spacingAndGlyphs">du</text>
    </svg>
  );
}

function SpeedBall() {
  return (
    <div className="absolute left-0 top-[357px] h-[42px] w-[18px] overflow-hidden">
      <div className="absolute -left-[22px] top-[3px] flex h-[36px] w-[36px] items-center justify-end rounded-full border-2 border-[#e6eee8] bg-gradient-to-b from-[#5fd27a] to-[#27a94b] pr-[1px] font-['Noto_Sans',sans-serif] text-[8px] font-bold text-white shadow-[0_1px_3px_#666]">
        65
      </div>
    </div>
  );
}

export default function App() {
  return (
    <div className="relative flex h-[532px] w-[1000px] flex-col overflow-hidden bg-white font-['Noto_Sans','Noto_Sans_CJK_SC',sans-serif]">
      <OfficeButton />
      <TitleBar />
      <TabBar />
      <Ribbon />
      <FormulaBar />
      <div className="flex h-[369.500px] overflow-hidden">
        <Grid />
        <VScroll />
      </div>
      <SheetTabs />
      <StatusBar />
      <Watermark />
      <SpeedBall />
      <div className="absolute left-[121px] top-[492px] h-[29px] w-[118px] border-2 border-[#ef3b3b]" />
    </div>
  );
}
